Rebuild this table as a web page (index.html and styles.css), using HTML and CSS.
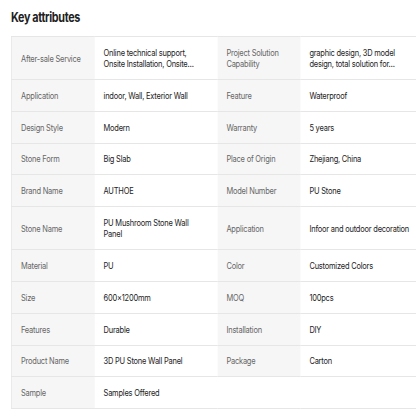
FILE: index.html
```html
<!DOCTYPE html>
<html>
<head>
<meta charset="utf-8">
<link rel="stylesheet" href="styles.css">
</head>
<body>
<div class="page">
  <div class="squeeze">
    <h2 class="title">Key attributes</h2>
    <table class="attrs">
      <colgroup>
        <col class="c-label"><col class="c-value"><col class="c-label"><col class="c-value2">
      </colgroup>
      <tr class="tall">
        <td class="label">After-sale Service</td>
        <td class="value">Online technical support, Onsite Installation, Onsite…</td>
        <td class="label">Project Solution Capability</td>
        <td class="value">graphic design, 3D model design, total solution for…</td>
      </tr>
      <tr>
        <td class="label">Application</td><td class="value">indoor, Wall, Exterior Wall</td>
        <td class="label">Feature</td><td class="value">Waterproof</td>
      </tr>
      <tr>
        <td class="label">Design Style</td><td class="value">Modern</td>
        <td class="label">Warranty</td><td class="value">5 years</td>
      </tr>
      <tr>
        <td class="label">Stone Form</td><td class="value">Big Slab</td>
        <td class="label">Place of Origin</td><td class="value">Zhejiang, China</td>
      </tr>
      <tr>
        <td class="label">Brand Name</td><td class="value">AUTHOE</td>
        <td class="label">Model Number</td><td class="value">PU Stone</td>
      </tr>
      <tr class="tall">
        <td class="label">Stone Name</td><td class="value">PU Mushroom Stone Wall Panel</td>
        <td class="label">Application</td><td class="value">Infoor and outdoor decoration</td>
      </tr>
      <tr>
        <td class="label">Material</td><td class="value">PU</td>
        <td class="label">Color</td><td class="value">Customized Colors</td>
      </tr>
      <tr>
        <td class="label">Size</td><td class="value">600×1200mm</td>
        <td class="label">MOQ</td><td class="value">100pcs</td>
      </tr>
      <tr>
        <td class="label">Features</td><td class="value">Durable</td>
        <td class="label">Installation</td><td class="value">DIY</td>
      </tr>
      <tr>
        <td class="label">Product Name</td><td class="value">3D PU Stone Wall Panel</td>
        <td class="label">Package</td><td class="value">Carton</td>
      </tr>
      <tr>
        <td class="label">Sample</td><td class="value">Samples Offered</td>
        <td class="empty"></td><td class="empty"></td>
      </tr>
    </table>
  </div>
</div>
</body>
</html>
```
FILE: styles.css
```css
html, body {
  margin: 0;
  padding: 0;
  overflow: hidden;
  background: #fff;
}
.page {
  width: 405px;
  padding: 9px 0 0 11px;
  overflow: hidden;
  font-family: Inter, "Noto Sans", sans-serif;
}
/* the reference glyphs are horizontally condensed */
.squeeze {
  width: 488px;
  transform: scaleX(0.83);
  transform-origin: 0 0;
}
.title {
  margin: 0 0 11px 0;
  font-size: 13px;
  line-height: 16px;
  font-weight: 700;
  color: #222;
  letter-spacing: -0.4px;
}
.attrs {
  border-collapse: collapse;
  table-layout: fixed;
  width: 488px;
  border-left: 1px solid #e6e6e6;
  border-top: 1px solid #e6e6e6;
}
.c-label { width: 100px; }
.c-value { width: 148px; }
.c-value2 { width: 140px; }
.attrs tr { height: 31.8px; }
.attrs tr.tall { height: 43px; }
.attrs td {
  border-bottom: 1px solid #e6e6e6;
  padding: 0 16px 0 11px;
  font-size: 9px;
  line-height: 11px;
  letter-spacing: -0.25px;
  vertical-align: middle;
}
.label {
  background: #f6f6f6;
  color: #666;
}
.value {
  background: #fff;
  color: #222;
  padding-left: 10px;
}
.attrs td.value:last-child {
  padding-right: 2px;
}
.empty {
  background: #fff;
}
```
